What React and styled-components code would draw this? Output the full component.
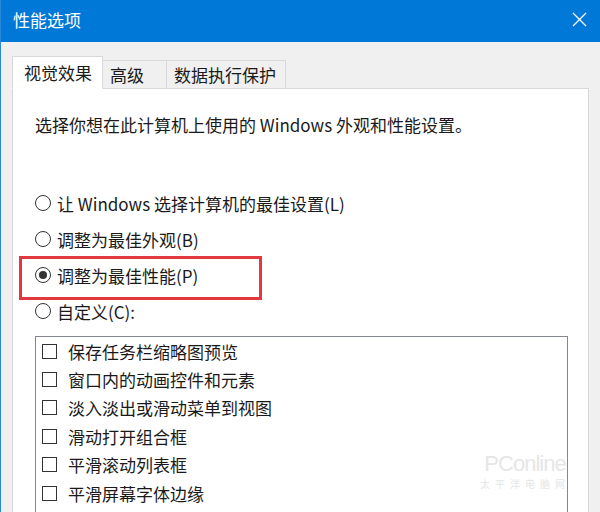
import React from 'react';
import styled, { createGlobalStyle } from 'styled-components';

const GlobalStyle = createGlobalStyle`
    html, body {
        margin: 0;
        padding: 0;
        height: 100%;
        overflow: hidden;
    }
    body {
        font-family: "Noto Sans CJK SC", "Noto Sans", sans-serif;
        color: #1a1a1a;
    }
`;

const Window = styled.div`
    display: flex;
    flex-direction: column;
    width: 600px;
    height: 512px;
    box-sizing: border-box;
    border-left: 1px solid #2b88d8;
    background: #f0f0f0;
    position: relative;
    overflow: hidden;
`;

const TitleBar = styled.div`
    display: flex;
    align-items: center;
    justify-content: space-between;
    height: 42px;
    flex: 0 0 42px;
    padding: 0 13px 4px 12px;
    box-sizing: border-box;
    background: #0078d7;
    color: #ffffff;
    font-size: 17px;
`;

const CloseButton = styled.div`
    display: flex;
    align-items: center;
    justify-content: center;
    width: 16px;
    height: 16px;
`;

const Body = styled.div`
    flex: 1;
    display: flex;
    flex-direction: column;
    padding: 14px 11px 0 11px;
`;

const TabStrip = styled.div`
    display: flex;
    align-items: flex-end;
    height: 33px;
    position: relative;
    z-index: 1;
    margin-bottom: -1px;
`;

const Tab = styled.div`
    box-sizing: border-box;
    width: ${p => p.$width}px;
    height: ${p => (p.$active ? 33 : 29)}px;
    padding-left: ${p => (p.$active ? 11 : 7)}px;
    display: flex;
    align-items: center;
    font-size: 17px;
    background: ${p => (p.$active ? '#ffffff' : '#f0f0f0')};
    border: 1px solid #d9d9d9;
    border-bottom: ${p => (p.$active ? '1px solid #ffffff' : '1px solid #d9d9d9')};
    border-left: ${p => (p.$active || p.$first ? '1px solid #d9d9d9' : 'none')};
    white-space: nowrap;
`;

const Panel = styled.div`
    flex: 1;
    background: #ffffff;
    border: 1px solid #d9d9d9;
    border-bottom: none;
    padding: 24px 19px 0 22px;
    display: flex;
    flex-direction: column;
`;

const Description = styled.div`
    font-size: 17px;
    line-height: 24px;
    margin-bottom: 48px;
`;

const RadioRow = styled.div`
    position: relative;
    display: flex;
    align-items: center;
    height: 36px;
    font-size: 17px;
    gap: 6px;
`;

const RadioCircle = styled.span`
    box-sizing: border-box;
    width: 16px;
    height: 16px;
    border-radius: 50%;
    border: 1.5px solid #333333;
    display: flex;
    align-items: center;
    justify-content: center;
    &::after {
        content: '';
        display: ${p => (p.$checked ? 'block' : 'none')};
        width: 8px;
        height: 8px;
        border-radius: 50%;
        background: #333333;
    }
`;

const Highlight = styled.span`
    position: absolute;
    left: -16px;
    top: -1px;
    width: 243px;
    height: 44px;
    box-sizing: border-box;
    border: 3px solid #e0393e;
    pointer-events: none;
`;

const ListBox = styled.div`
    margin-top: 7px;
    width: 533px;
    flex: 1;
    box-sizing: border-box;
    border: 1px solid #828790;
    border-bottom: none;
    padding-left: 6px;
    background: #ffffff;
`;

const CheckRow = styled.div`
    display: flex;
    align-items: center;
    height: 28.4px;
    gap: 11px;
    font-size: 17px;
`;

const CheckBox = styled.span`
    box-sizing: border-box;
    width: 15px;
    height: 15px;
    border: 1.5px solid #333333;
    background: #ffffff;
`;

const Watermark = styled.div`
    position: absolute;
    right: 30px;
    bottom: 22px;
    display: flex;
    flex-direction: column;
    align-items: center;
    gap: 3px;
    color: #e6e6e6;
    font-family: "Liberation Sans", sans-serif;
    line-height: 1;
    pointer-events: none;
`;

const WatermarkBrand = styled.span`
    font-size: 22px;
    letter-spacing: -1px;
`;

const WatermarkSub = styled.span`
    font-family: "Noto Sans CJK SC", sans-serif;
    font-size: 10px;
    line-height: 12px;
    letter-spacing: 5px;
`;

const tabs = [
    { label: '视觉效果', width: 91, active: true },
    { label: '高级', width: 64 },
    { label: '数据执行保护', width: 119 },
];

const radios = [
    { label: '让 Windows 选择计算机的最佳设置(L)' },
    { label: '调整为最佳外观(B)' },
    { label: '调整为最佳性能(P)', checked: true, highlight: true },
    { label: '自定义(C):' },
];

const effects = [
    '保存任务栏缩略图预览',
    '窗口内的动画控件和元素',
    '淡入淡出或滑动菜单到视图',
    '滑动打开组合框',
    '平滑滚动列表框',
    '平滑屏幕字体边缘',
];

const App = () => {
    return (
        <>
            <GlobalStyle />
            <Window>
                <TitleBar>
                    <span>性能选项</span>
                    <CloseButton>
                        <svg width="15" height="15" viewBox="0 0 15 15">
                            <path d="M1 1 L14 14 M14 1 L1 14" stroke="#ffffff" strokeWidth="1.3" fill="none" />
                        </svg>
                    </CloseButton>
                </TitleBar>
                <Body>
                    <TabStrip>
                        {tabs.map((t, i) => (
                            <Tab key={t.label} $width={t.width} $active={t.active} $first={i === 0}>
                                {t.label}
                            </Tab>
                        ))}
                    </TabStrip>
                    <Panel>
                        <Description>选择你想在此计算机上使用的 Windows 外观和性能设置。</Description>
                        {radios.map(r => (
                            <RadioRow key={r.label}>
                                <RadioCircle $checked={r.checked} />
                                <span>{r.label}</span>
                                {r.highlight && <Highlight />}
                            </RadioRow>
                        ))}
                        <ListBox>
                            {effects.map(e => (
                                <CheckRow key={e}>
                                    <CheckBox />
                                    <span>{e}</span>
                                </CheckRow>
                            ))}
                        </ListBox>
                    </Panel>
                </Body>
                <Watermark>
                    <WatermarkBrand>PConline</WatermarkBrand>
                    <WatermarkSub>太平洋电脑网</WatermarkSub>
                </Watermark>
            </Window>
        </>
    );
};

export default App;
